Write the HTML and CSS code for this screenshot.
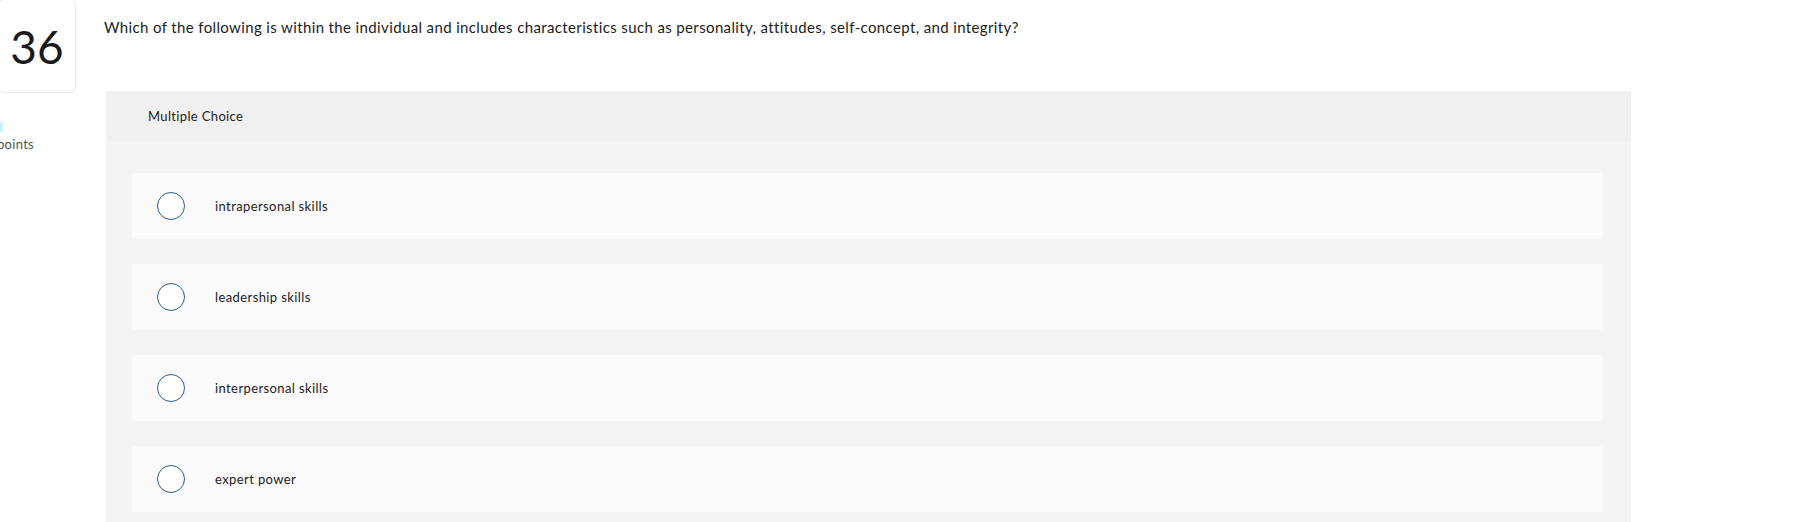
FILE: index.html
```html
<!DOCTYPE html>
<html lang="en">
<head>
<meta charset="utf-8">
<title>Question 36</title>
<link rel="stylesheet" href="styles.css">
</head>
<body>
<div class="page">
  <aside class="side">
    <div class="num-box">36</div>
    <div class="points">
      <span class="points-mark"></span>
      <span class="points-label">points</span>
    </div>
  </aside>
  <main class="main">
    <p class="question">Which of the following is within the individual and includes characteristics such as personality, attitudes, self-concept, and integrity?</p>
    <section class="panel">
      <div class="panel-head">Multiple Choice</div>
      <div class="panel-body">
        <label class="option"><span class="radio"></span><span class="option-text">intrapersonal skills</span></label>
        <label class="option"><span class="radio"></span><span class="option-text">leadership skills</span></label>
        <label class="option"><span class="radio"></span><span class="option-text">interpersonal skills</span></label>
        <label class="option"><span class="radio"></span><span class="option-text">expert power</span></label>
      </div>
    </section>
  </main>
</div>
</body>
</html>
```

FILE: styles.css
```css
html, body {
  margin: 0;
  padding: 0;
  background: #ffffff;
  height: 522px;
  overflow: hidden;
}

body {
  font-family: Lato, "Liberation Sans", sans-serif;
  color: #1c1c1c;
}

.page {
  display: flex;
  align-items: flex-start;
}

.side {
  width: 106px;
  flex-shrink: 0;
}

.num-box {
  box-sizing: border-box;
  width: 78px;
  height: 94px;
  margin-left: -2px;
  margin-top: -1px;
  border: 1px solid #e9e9e9;
  border-radius: 6px;
  display: flex;
  align-items: center;
  justify-content: center;
  font-size: 46px;
  font-weight: 400;
  color: #1a1a1a;
}

.points {
  margin-top: 29px;
}

.points-mark {
  display: block;
  width: 3px;
  height: 10px;
  background: #c6f3f7;
}

.points-label {
  display: block;
  margin-left: -3px;
  margin-top: 4px;
  font-size: 13px;
  line-height: 16px;
  letter-spacing: 0.3px;
  color: #555555;
}

.main {
  width: 1525px;
  flex-shrink: 0;
}

.question {
  margin: 17px 0 0 -2px;
  font-size: 15px;
  line-height: 20px;
  letter-spacing: 0.37px;
  color: #1c1c1c;
}

.panel {
  margin-top: 54px;
  border-radius: 2px 2px 0 0;
  overflow: hidden;
  background: #f4f4f4;
}

.panel-head {
  height: 50px;
  padding-left: 42px;
  display: flex;
  align-items: center;
  background: #f0f0f0;
  font-size: 13px;
  letter-spacing: 0.35px;
  color: #222222;
}

.panel-body {
  padding: 32px 28px 26px 26px;
  display: flex;
  flex-direction: column;
  gap: 25px;
}

.option {
  height: 66px;
  box-sizing: border-box;
  padding-left: 25px;
  display: flex;
  align-items: center;
  background: #fafafa;
  border-radius: 4px;
}

.radio {
  box-sizing: border-box;
  width: 28px;
  height: 28px;
  flex-shrink: 0;
  border: 1.5px solid #2d5d8b;
  border-radius: 50%;
  background: #ffffff;
  margin-right: 30px;
}

.option-text {
  font-size: 13px;
  letter-spacing: 0.4px;
  color: #222222;
}
```
